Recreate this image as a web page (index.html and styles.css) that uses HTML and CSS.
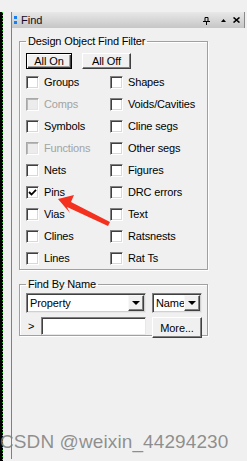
FILE: index.html
```html
<!DOCTYPE html>
<html lang="en">
<head>
	<meta charset="UTF-8">
	<title>Find</title>
	<link rel="stylesheet" href="styles.css">
</head>
<body>

	<div class="screen">
		<div class="strip"></div>
		<div class="dock">
			<header class="titlebar">
				<span class="grip"><i></i><i></i></span>
				<span class="title">Find</span>
				<span class="tools">
					<svg class="pin" width="7" height="8" viewBox="0 0 7 8">
						<path d="M2 0.5h3v4h-3z M0 4.5h7 M3.5 4.5v3.5" fill="none" stroke="#000" stroke-width="1"/>
					</svg>
					<svg class="up" width="5" height="3" viewBox="0 0 5 3">
						<path d="M2.5 0 L5 3 L0 3 Z" fill="#000"/>
					</svg>
					<svg class="close" width="7" height="6" viewBox="0 0 7 6">
						<path d="M0.5 0.5 L6.5 5.5 M6.5 0.5 L0.5 5.5" stroke="#000" stroke-width="1.6"/>
					</svg>
				</span>
			</header>

			<div class="content">
				<fieldset class="group filter">
					<legend>Design Object Find Filter</legend>
					<div class="btn-row">
						<button class="btn default">All On</button>
						<button class="btn off">All Off</button>
					</div>
					<ul class="checks">
						<li><span class="box"></span>Groups</li>
						<li class="disabled"><span class="box"></span>Comps</li>
						<li><span class="box"></span>Symbols</li>
						<li class="disabled"><span class="box"></span>Functions</li>
						<li><span class="box"></span>Nets</li>
						<li><span class="box checked"><svg width="9" height="9" viewBox="0 0 9 9"><polyline points="1,4 3.5,6.5 8,1.8" fill="none" stroke="#000" stroke-width="1.8"/></svg></span>Pins</li>
						<li><span class="box"></span>Vias</li>
						<li><span class="box"></span>Clines</li>
						<li><span class="box"></span>Lines</li>
						<li><span class="box"></span>Shapes</li>
						<li><span class="box"></span>Voids/Cavities</li>
						<li><span class="box"></span>Cline segs</li>
						<li><span class="box"></span>Other segs</li>
						<li><span class="box"></span>Figures</li>
						<li><span class="box"></span>DRC errors</li>
						<li><span class="box"></span>Text</li>
						<li><span class="box"></span>Ratsnests</li>
						<li><span class="box"></span>Rat Ts</li>
					</ul>
				</fieldset>

				<fieldset class="group by-name">
					<legend>Find By Name</legend>
					<div class="combo-row">
						<div class="combo property"><span class="value">Property</span><span class="drop"></span></div>
						<div class="combo name"><span class="value">Name</span><span class="drop"></span></div>
					</div>
					<div class="input-row">
						<span class="prompt">&gt;</span>
						<span class="input"></span>
						<button class="btn more">More...</button>
					</div>
				</fieldset>
			</div>
		</div>

		<!-- annotation arrow over the Pins entry -->
		<svg class="arrow" width="247" height="461" viewBox="0 0 247 461">
			<polygon points="58,199 74,195 71,202 110,222 108,226 67,207 70,213" fill="#f4301f"/>
		</svg>
		<div class="watermark">CSDN @weixin_44294230</div>
	</div>

</body>
</html>
```

FILE: styles.css
```css
* {
	margin:0;
	padding:0;
	box-sizing:border-box;
}
html,body {
	background:#f0f0f0;
}
body {
	font-family:"Liberation Sans", Arial, sans-serif;
	font-size:11px;
	color:#000;
}
ul {
	list-style:none;
}
.screen {
	position:relative;
	display:flex;
	width:247px;
	height:461px;
	overflow:hidden;
}
.strip {
	margin-top:12px;
	width:3px;
	height:449px;
	background:linear-gradient(to right, #000 2px, transparent 2px), repeating-linear-gradient(#33cc33 0 1px, #000 1px 3px);
}
.dock {
	margin:12px 0 0 8px;
	width:234px;
	height:447px;
	border-left:1px solid #808080;
}

/* title bar */
.titlebar {
	display:flex;
	align-items:center;
	height:16px;
	padding-left:2px;
	border-right:1px solid #8a8a8a;
	background:linear-gradient(#e8e8e8, #c6c6c6);
}
.grip {
	display:flex;
	flex-direction:column;
	gap:2px;
	width:3px;
}
.grip i {
	display:block;
	width:3px;
	height:3px;
	background:#1a7ef0;
}
.title {
	margin-left:4px;
	line-height:16px;
	color:#0c0c28;
}
.tools {
	display:flex;
	align-items:center;
	margin-left:auto;
	padding-right:4px;
}
.pin {
	margin-top:2px;
}
.up {
	margin-left:11px;
}
.close {
	margin-left:7px;
}

/* group boxes */
.content {
	padding-left:7px;
}
.group {
	width:189px;
	border:1px solid #a0a0a0;
	box-shadow:inset 1px 1px 0 #fff, 1px 1px 0 #fff;
	padding:0 4px 0 6px;
}
.group legend {
	padding:0 2px;
	margin-left:0;
	line-height:13px;
	letter-spacing:-0.15px;
}
.filter {
	margin-top:7px;
	padding-top:5px;
	padding-bottom:4px;
}
.by-name {
	margin-top:8px;
	padding-top:2px;
	padding-bottom:0;
}

/* buttons */
.btn {
	font:inherit;
	color:#000;
	height:16px;
	background:#f0f0f0;
	border:1px solid;
	border-color:#fff #404040 #404040 #fff;
	box-shadow:inset -1px -1px 0 #808080;
	line-height:13px;
	letter-spacing:-0.1px;
}
.btn-row {
	display:flex;
	gap:10px;
	height:16px;
	margin-bottom:7px;
}
.btn.default {
	width:46px;
	border-color:#000;
	box-shadow:inset 1px 1px 0 #fff, inset -1px -1px 0 #404040, inset -2px -2px 0 #a0a0a0;
}
.btn.off {
	width:49px;
}

/* check list */
.checks {
	display:grid;
	grid-template-columns:84px auto;
	grid-template-rows:repeat(9, 13px);
	grid-auto-flow:column;
	row-gap:9px;
}
.checks li {
	display:flex;
	align-items:center;
	gap:5px;
	line-height:13px;
	letter-spacing:-0.15px;
	white-space:nowrap;
}
.box {
	display:flex;
	align-items:center;
	justify-content:center;
	width:13px;
	height:13px;
	background:#fff;
	border:1px solid;
	border-color:#808080 #fff #fff #808080;
	box-shadow:inset 1px 1px 0 #404040, inset -1px -1px 0 #d8d8d8;
}
.box svg {
	display:block;
}
.disabled {
	color:#a3a3a3;
}
.disabled .box {
	background:#ececec;
	border-color:#a8a8a8 #fff #fff #a8a8a8;
	box-shadow:inset 1px 1px 0 #b8b8b8, inset -1px -1px 0 #e4e4e4;
}

/* find by name */
.combo-row {
	display:flex;
	gap:6px;
	height:20px;
	margin-bottom:4px;
}
.combo {
	display:flex;
	align-items:center;
	height:20px;
	padding:0 1px 0 3px;
	background:#fff;
	border:1px solid;
	border-color:#808080 #e8e8e8 #e8e8e8 #808080;
	box-shadow:inset 1px 1px 0 #404040, inset -1px -1px 0 #d0d0d0;
	letter-spacing:-0.1px;
}
.combo.property {
	width:120px;
}
.combo.name {
	width:50px;
}
.combo .value {
	flex:1;
	overflow:hidden;
	white-space:nowrap;
}
.drop {
	position:relative;
	width:16px;
	height:16px;
	background:#f0f0f0;
	border:1px solid;
	border-color:#f8f8f8 #404040 #404040 #f8f8f8;
	box-shadow:inset -1px -1px 0 #808080;
}
.drop::after {
	content:"";
	position:absolute;
	left:3px;
	top:5px;
	border-left:4px solid transparent;
	border-right:4px solid transparent;
	border-top:4px solid #000;
}
.input-row {
	display:flex;
	align-items:flex-start;
	height:18px;
}
.prompt {
	width:15px;
	padding-left:2px;
	line-height:18px;
}
.input {
	width:105px;
	height:18px;
	background:#fff;
	border:1px solid;
	border-color:#808080 #e8e8e8 #e8e8e8 #808080;
	box-shadow:inset 1px 1px 0 #404040;
}
.btn.more {
	margin-left:6px;
	width:50px;
	height:21px;
	line-height:18px;
}

/* overlays */
.arrow {
	position:absolute;
	left:0;
	top:0;
	pointer-events:none;
}
.watermark {
	position:absolute;
	left:0;
	top:432px;
	font-size:19px;
	line-height:19px;
	letter-spacing:0.1px;
	color:rgba(125,125,125,0.85);
	white-space:nowrap;
}
```
